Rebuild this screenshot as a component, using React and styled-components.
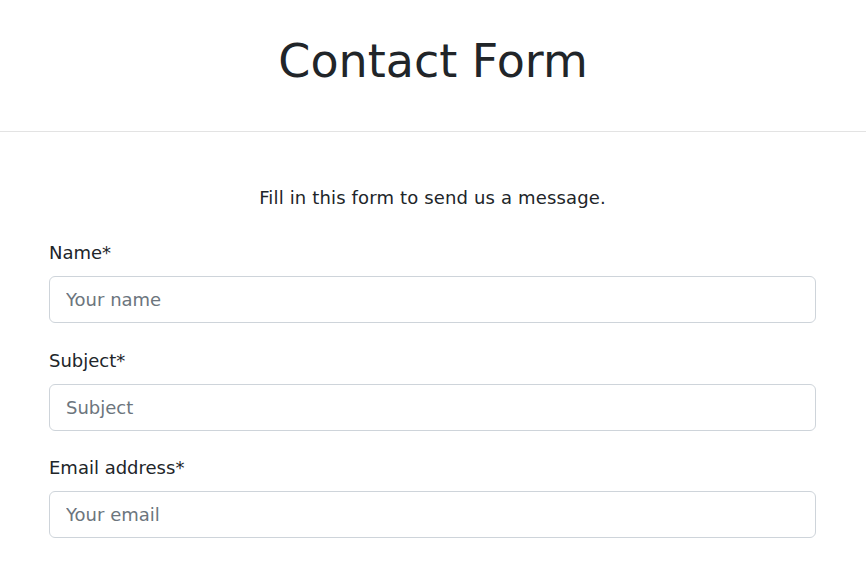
import React from 'react';
import styled, { createGlobalStyle } from 'styled-components';

const GlobalStyle = createGlobalStyle`
  body {
    margin: 0;
    background: #fff;
    color: #212529;
    font-family: "DejaVu Sans", "Liberation Sans", sans-serif;
  }
  * {
    box-sizing: border-box;
  }
`;

const Header = styled.header`
  height: 132px;
  border-bottom: 1px solid #e3e3e3;
  display: flex;
  align-items: center;
  justify-content: center;
  padding-bottom: 10px;
`;

const Title = styled.h1`
  margin: 0;
  font-size: 46px;
  font-weight: 400;
  color: #212529;
`;

const Main = styled.main`
  padding: 52px 50px 0 49px;
`;

const Intro = styled.p`
  margin: 0 0 28px;
  text-align: center;
  font-size: 18px;
  line-height: 27px;
  letter-spacing: 0.15px;
`;

const Field = styled.div`
  display: flex;
  flex-direction: column;
  margin-bottom: 23.5px;
`;

const Label = styled.label`
  font-size: 18px;
  line-height: 27px;
  margin-bottom: 10px;
`;

const Input = styled.input`
  width: 100%;
  height: 47px;
  padding: 0 16px;
  font-family: inherit;
  font-size: 18px;
  color: #212529;
  border: 1px solid #ced4da;
  border-radius: 6px;
  background: #fff;
  outline: none;
  &::placeholder {
    color: #6c757d;
  }
`;

const fields = [
  { label: 'Name', placeholder: 'Your name', type: 'text' },
  { label: 'Subject', placeholder: 'Subject', type: 'text' },
  { label: 'Email address', placeholder: 'Your email', type: 'email' },
];

export default function App() {
  return (
    <>
      <GlobalStyle />
      <Header>
        <Title>Contact Form</Title>
      </Header>
      <Main>
        <Intro>Fill in this form to send us a message.</Intro>
        <form>
          {fields.map((f) => (
            <Field key={f.label}>
              <Label>{f.label}*</Label>
              <Input type={f.type} placeholder={f.placeholder} />
            </Field>
          ))}
        </form>
      </Main>
    </>
  );
}
